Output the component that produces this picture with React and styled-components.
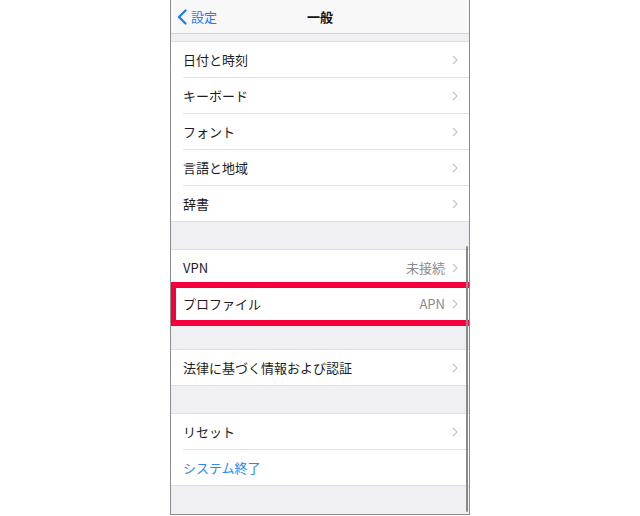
import React from "react";
import styled, { createGlobalStyle } from "styled-components";

const Global = createGlobalStyle`
  html, body { margin: 0; padding: 0; background: #ffffff; }
  body { font-family: "Noto Sans CJK JP", "Noto Sans", sans-serif; }
`;

const Page = styled.div`
  width: 640px;
  height: 516px;
  display: flex;
  justify-content: center;
  overflow: hidden;
`;

const Phone = styled.div`
  position: relative;
  width: 298px;
  height: 514px;
  border: 1px solid #8c8c8c;
  border-top: none;
  background: #efeff4;
  display: flex;
  flex-direction: column;
  overflow: hidden;
`;

const NavBar = styled.div`
  position: relative;
  height: 33px;
  flex: none;
  background: #f8f8f8;
  border-bottom: 1px solid #d4d4d8;
  display: flex;
  align-items: center;
`;

const Back = styled.div`
  display: flex;
  align-items: center;
  gap: 4px;
  padding-left: 6px;
  color: #1a7cf5;
  font-size: 13px;
`;

const Title = styled.div`
  position: absolute;
  left: 0;
  right: 0;
  text-align: center;
  font-size: 13px;
  font-weight: 700;
  color: #111;
  pointer-events: none;
`;

const Gap = styled.div`
  height: ${(p) => p.$h}px;
  flex: none;
`;

const Group = styled.div`
  background: #ffffff;
  border-top: 1px solid #dedee2;
  border-bottom: 1px solid #dedee2;
  flex: none;
`;

const Row = styled.div`
  position: relative;
  height: ${(p) => (p.$last ? 35 : 36)}px;
  margin-left: 12px;
  padding-right: 11px;
  display: flex;
  align-items: center;
  border-bottom: ${(p) => (p.$last ? "none" : "1px solid #e2e2e6")};
  box-sizing: border-box;
`;

const Label = styled.span`
  flex: 1;
  font-size: 13px;
  color: ${(p) => (p.$link ? "#2a86f2" : "#1c1c1c")};
`;

const Value = styled.span`
  font-size: 13px;
  color: #8a8a8f;
  margin-right: 7px;
`;

const Highlight = styled.div`
  position: absolute;
  left: -13px;
  right: -12px;
  top: -4px;
  bottom: -5px;
  border: 6px solid #f5003d;
  pointer-events: none;
`;

const ScrollBar = styled.div`
  position: absolute;
  right: 1px;
  top: 246px;
  bottom: 2px;
  width: 2px;
  border-radius: 1px;
  background: #8a8a8a;
`;

const Chevron = () => (
  <svg width="6" height="10" viewBox="0 0 6 10">
    <path d="M1 1 L5 5 L1 9" fill="none" stroke="#c4c4c8" strokeWidth="1.2" />
  </svg>
);

const BackChevron = () => (
  <svg width="10" height="16" viewBox="0 0 10 16">
    <path d="M8.5 1.5 L2 8 L8.5 14.5" fill="none" stroke="#1a7cf5" strokeWidth="2.2" strokeLinecap="round" strokeLinejoin="round" />
  </svg>
);

const Item = ({ label, value, last, link, chevron = true, highlight }) => (
  <Row $last={last}>
    <Label $link={link}>{label}</Label>
    {value && <Value>{value}</Value>}
    {chevron && <Chevron />}
    {highlight && <Highlight />}
  </Row>
);

export default function App() {
  return (
    <>
      <Global />
      <Page>
        <Phone>
          <NavBar>
            <Back>
              <BackChevron />
              <span>設定</span>
            </Back>
            <Title>一般</Title>
          </NavBar>
          <Gap $h={7} />
          <Group>
            <Item label="日付と時刻" />
            <Item label="キーボード" />
            <Item label="フォント" />
            <Item label="言語と地域" />
            <Item label="辞書" last />
          </Group>
          <Gap $h={27} />
          <Group>
            <Item label="VPN" value="未接続" />
            <Item label="プロファイル" value="APN" last highlight />
          </Group>
          <Gap $h={27} />
          <Group>
            <Item label="法律に基づく情報および認証" last />
          </Group>
          <Gap $h={27} />
          <Group>
            <Item label="リセット" />
            <Item label="システム終了" link chevron={false} last />
          </Group>
          <ScrollBar />
        </Phone>
      </Page>
    </>
  );
}
